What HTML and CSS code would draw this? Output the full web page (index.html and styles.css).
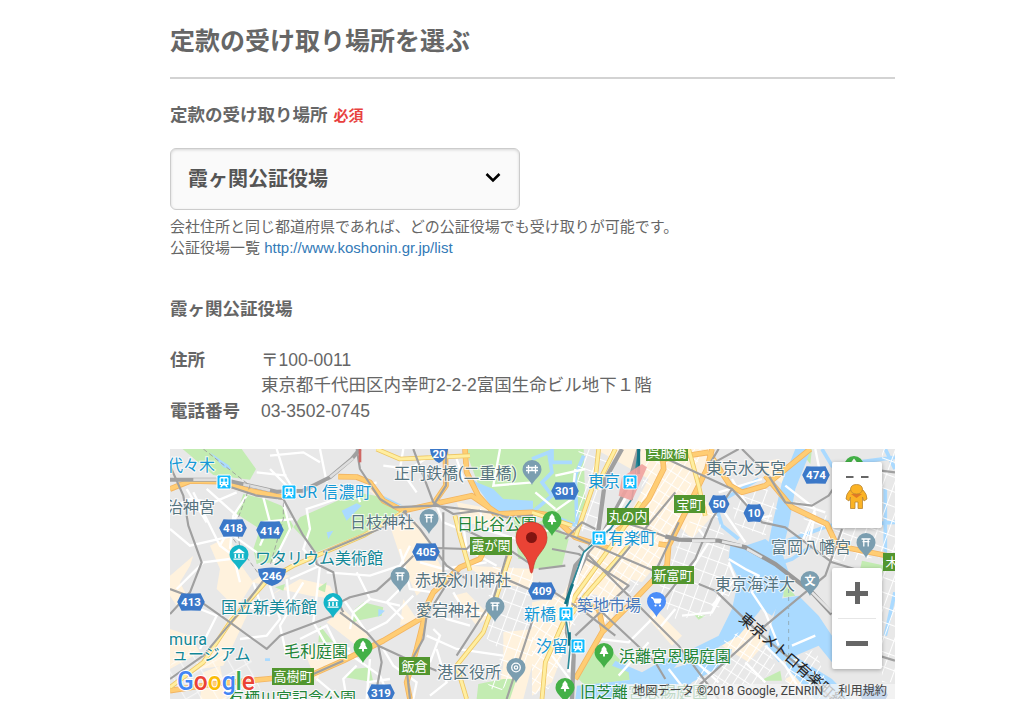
FILE: index.html
```html
<!DOCTYPE html>
<html lang="ja">
<head>
    <meta charset="UTF-8">
    <meta name="viewport" content="width=device-width, initial-scale=1.0">
    <title>定款の受け取り場所を選ぶ</title>
    <link rel="stylesheet" href="styles.css">
</head>
<body>
    <div class="container">
        <h1 class="title">定款の受け取り場所を選ぶ</h1>

        <div class="field">
            <div class="label">定款の受け取り場所<span class="required">必須</span></div>
            <div class="select">
                <span>霞ヶ関公証役場</span>
                <svg class="arrow" width="16" height="12" viewBox="0 0 16 12"><path d="M1.500 2 8 8.500 14.500 2" fill="none" stroke="#000" stroke-width="2.500"/></svg>
            </div>
            <p class="help">会社住所と同じ都道府県であれば、どの公証役場でも受け取りが可能です。<br>公証役場一覧 <a href="http://www.koshonin.gr.jp/list">http://www.koshonin.gr.jp/list</a></p>
        </div>

        <h2 class="office">霞ヶ関公証役場</h2>
        <dl class="info">
            <dt>住所</dt>
            <dd>〒100-0011<br>東京都千代田区内幸町2-2-2富国生命ビル地下１階</dd>
            <dt>電話番号</dt>
            <dd>03-3502-0745</dd>
        </dl>

        <div class="map">
            <svg class="map-canvas" width="725" height="250" viewBox="170 449 725 250">
                <defs>
                    <pattern id="grid-a" width="34" height="24" patternUnits="userSpaceOnUse" patternTransform="rotate(-57)">
                        <path d="M0 0H34M0 0V24" stroke="#fff" stroke-width="6" fill="none"/>
                    </pattern>
                    <pattern id="grid-b" width="32" height="42" patternUnits="userSpaceOnUse" patternTransform="rotate(20)">
                        <path d="M0 0H32M0 0V42" stroke="#fff" stroke-width="6" fill="none"/>
                    </pattern>
                    <pattern id="grid-c" width="42" height="56" patternUnits="userSpaceOnUse" patternTransform="rotate(-30)">
                        <path d="M0 0H42M0 0V56" stroke="#fff" stroke-width="7" fill="none"/>
                    </pattern>
                    <!-- ピンの先端が原点 -->
                    <path id="pin" d="M0 0C-1.500-5-9.500-9-9.500-15.500A9.500 9.500 0 0 1 9.500-15.500C9.500-9 1.500-5 0 0Z"/>
                    <g id="shrine">
                        <use href="#pin" fill="#7b9eb0"/>
                        <path d="M-4.500-19H4.500M-3.500-16.300H3.500M-2.200-19V-11.500M2.200-19V-11.500" stroke="#fff" stroke-width="1.300" fill="none"/>
                    </g>
                    <g id="tree">
                        <use href="#pin" fill="#43b047"/>
                        <path d="M0-22.500-3-18.500H-2L-4.500-14H-1V-11.500H1V-14H4.500L2-18.500H3Z" fill="#fff"/>
                    </g>
                    <g id="museum">
                        <use href="#pin" fill="#14b5c8"/>
                        <path d="M-5.500-17.500 0-21.500 5.500-17.500V-16.700H-5.500ZM-5.500-11.500H5.500V-10.300H-5.500ZM-4.500-16h1.600v4h-1.600ZM-.8-16h1.600v4h-1.600ZM2.900-16h1.600v4h-1.600Z" fill="#fff"/>
                    </g>
                    <g id="train">
                        <rect x="-7" y="-7" width="14" height="14" rx="1.500" fill="#0fbcff" stroke="#fff" stroke-width="1"/>
                        <path d="M-4.500-3.500Q-4.500-5-3-5H3Q4.500-5 4.500-3.500V3H2.800L4 5.300H2.300L1 3.500H-1L-2.300 5.300H-4L-2.800 3H-4.500Z" fill="#fff"/>
                        <path d="M-3.200-3.500H-.6V-.3H-3.200ZM.6-3.500H3.200V-.3H.6ZM-3 .8H-1.600V2H-3ZM1.600.8H3V2H1.600Z" fill="#0fbcff"/>
                    </g>
                    <path id="hex" d="M-13.800 0-9.500-8.800Q0-8 9.500-8.800L13.800 0 9.500 8.800Q0 8-9.500 8.800Z" fill="#3b78c8"/>
                    <path id="hex-s" d="M-10.500 0-6-9Q0-8 6-9L10.500 0 6 9Q0 8-6 9Z" fill="#3b78c8"/>
                    <path id="shield" d="M-14-7Q0-10 14-7 13.500 6 0 10-13.500 6-14-7Z" fill="#3b78c8"/>

                    <!-- 道路の形（西側・東側） -->
                    <g id="express-w">
                        <path d="M0 120 60 96 150 98 240 125 340 145M505 83 560 84 600 100 640 155 700 185 790 165 905 140 1000 205M826 0 828 110 790 165M885 0 890 70 925 140 975 195 1089 190"/>
                        <path d="M0 725 130 705 290 690 430 675 520 635 640 575 750 510 790 430 870 355 930 330 960 270M765 500 740 600 710 700 720 750"/>
                    </g>
                    <g id="express-e">
                        <path d="M530 10 595 110 630 130 700 110 835 0M400 30 530 10M700 80 780 175 885 225 915 290 1089 325"/>
                        <path d="M390 0 395 60 350 150 290 220 250 250M540 0 525 60 440 230 410 290 405 350 300 460 210 550 130 690M380 285 415 290M110 445 200 480 215 550"/>
                        <path d="M0 190 60 200 130 265 235 300"/>
                    </g>
                    <g id="avenue-w">
                        <path d="M0 715 100 640 180 520 290 395 370 350 440 320 580 260 700 190M855 200 870 260 900 365M620 0 690 30 900 20M1020 320 980 440 940 550 860 650 890 750"/>
                    </g>
                    <g id="avenue-e">
                        <path d="M200 0 190 90 130 265M325 160 260 260 130 440 40 640 30 750M290 290 160 440 100 520M250 0 190 120M0 190 120 230M470 0 500 110 520 200"/>
                    </g>
                </defs>

                <rect x="170" y="449" width="725" height="250" fill="#e8e8e8"/>

                <!-- 市街地 -->
                <g fill="#fff2dd">
                    <g transform="translate(170 449) scale(.3333)">
                        <path d="M0 380 70 320 60 350 30 400 50 440 20 470 0 440ZM120 290 180 260 200 330 250 400 200 480 140 420 150 360ZM180 500 240 480 160 650 90 660ZM0 540 60 560 90 610 0 660Z"/>
                        <path d="M300 440 390 390 480 410 500 450 420 440 330 420ZM240 400 290 370 360 380 310 410ZM100 670 150 650 170 750 90 750ZM470 520 520 480 600 560 560 590ZM400 600 520 580 560 630 460 650 440 700Z"/>
                        <path d="M660 230 740 220 790 310 850 420 780 400 740 440 700 350ZM580 110 700 210 660 160ZM850 440 890 430 960 500 920 530ZM700 450 740 510 690 530ZM890 350 1089 360V420L960 400ZM1000 550 1089 540V640L1060 750H980L1000 650ZM860 160 970 180 1000 240 880 220Z"/>
                    </g>
                    <g transform="translate(532 449) scale(.3333)">
                        <path d="M190 0H540L500 100 420 290 330 400 220 370 170 310 290 200 350 90Z"/>
                        <path d="M150 330 270 260 330 340 260 450 150 430 90 620 60 700 0 740V460L90 440ZM200 430 260 420 240 520 170 500ZM510 150 560 180 480 270 440 230ZM360 470 450 560 420 590 350 510ZM640 530 710 570 650 640 570 590ZM670 40 740 30 760 110 700 70ZM760 690 830 650 860 680 800 730Z"/>
                    </g>
                </g>

                <!-- 公園 -->
                <g fill="#c3ecb2">
                    <g transform="translate(170 449) scale(.3333)">
                        <path d="M38 0H215L258 60 240 92 130 78Z"/>
                        <path d="M220 135 285 150 335 170 370 230 310 340 260 345 250 300 270 240 200 195Z"/>
                        <path d="M390 205 560 130 640 145 690 185 610 240 440 310 370 235Z"/>
                        <path d="M885 0H1089V190L990 190 930 120ZM1030 200H1089V330H1045Z"/>
                        <path d="M555 480 580 460 640 475 635 500 560 515 540 530ZM440 420 470 400 465 430ZM315 415 345 405 340 425ZM450 530 490 580 445 580ZM550 660 600 655 610 700 525 685ZM925 705 1000 690 1040 690 1020 750H920Z"/>
                    </g>
                    <g transform="translate(532 449) scale(.3333)">
                        <path d="M0 0H155L160 170 120 230 50 200 0 190ZM50 205 110 270 90 350 0 360V230Z"/>
                        <path d="M170 620 220 585 290 660 310 690 160 710 130 680ZM480 490 520 500 500 512ZM620 455 660 420 665 460ZM750 390 790 440 755 445ZM835 45 800 0H840ZM685 695 745 665 750 695ZM990 335 1060 350 1040 400 980 380Z"/>
                    </g>
                </g>

                <!-- 水面 -->
                <g fill="#aadaff">
                    <g transform="translate(170 449) scale(.3333)">
                        <path d="M885 65 920 100 970 120 1000 150 1089 155V195H1000L965 175 930 125ZM515 185 560 163 575 170 530 215ZM470 250 490 245 475 270ZM625 480 645 485 625 503ZM120 10 155 35 175 48 185 62 160 55ZM285 628H300V636H285ZM640 140 700 170 650 158Z"/>
                    </g>
                    <g transform="translate(532 449) scale(.3333)">
                        <path d="M790 0H838L790 120 770 230 745 330 690 380 720 230 750 100Z"/>
                        <path d="M595 290 640 300 690 345 720 430 680 490 620 560 550 600 440 640 400 690 380 750H300L290 670 240 650 250 635 330 670 400 630 480 600 560 560 600 480 620 390 590 330Z"/>
                        <path d="M640 290 700 270 750 310 770 370 750 450 720 500 640 450 620 380Z"/>
                        <path d="M740 450 800 440 860 500 900 560V640L860 590 790 620 740 640 700 590Z"/>
                        <path d="M390 670 600 600 590 640 480 700 440 750H370ZM770 610 900 690 960 750H850L760 650ZM135 710 320 690 310 750H130Z"/>
                    </g>
                </g>
                <g transform="translate(532 449) scale(.3333)" fill="none" stroke="#aadaff" stroke-width="11">
                    <path d="M0 30 50 10 60 70 30 100 60 140 0 190M155 20 130 80 135 230 60 200M60 0V40H120M545 150 570 230 620 270M700 300 890 230 1089 220M870 0 900 50 1089 25M1060 120V360M1089 430 1060 560M680 90 560 160M820 200 890 220M1060 0 1089 60M840 290 780 330 720 350"/>
                </g>

                <!-- 細街路 -->
                <g transform="translate(532 449) scale(.3333)">
                    <path d="M200 260 320 160 350 0 510 0 420 290 300 430 150 480 50 720 0 740V480L100 430 150 320Z" fill="url(#grid-a)"/>
                    <path d="M460 230 540 150 590 300 600 430 540 500 430 510 370 440Z" fill="url(#grid-b)"/>
                    <path d="M600 150 700 110 740 190 700 260 610 230ZM820 190 1089 230V320L900 340 800 270ZM1050 0H1089V700H1050Z" fill="url(#grid-b)"/>
                    <path d="M580 570 680 520 730 650 640 750H450ZM760 640 850 600 900 750H760Z" fill="url(#grid-a)"/>
                    <path d="M140 0 240 0 190 260 130 240Z" fill="url(#grid-b)"/>
                </g>
                <g transform="translate(170 449) scale(.3333)">
                    <path d="M970 340 1089 370V620L980 740 950 700 1000 610 940 560Z" fill="url(#grid-b)"/>
                    <path d="M40 600 240 620 280 750H0V650Z" fill="url(#grid-c)" opacity=".6"/>
                </g>
                <g fill="none" stroke="#fff" stroke-width="7">
                    <g transform="translate(170 449) scale(.3333)">
                        <path d="M0 180 60 150 130 160 200 130M70 130 150 290 190 320 210 400M110 120 200 200 150 290M50 120 110 220M0 240 60 290 190 260 260 310M230 140 190 200 180 300M280 145 300 220 270 290M270 220 370 210M300 60 350 110 320 150M320 0 345 80 370 120M300 20 400 10 450 40M450 0 470 100M260 70 350 80M360 390 450 350 440 440 430 520 470 590M440 350 400 300 420 240 410 180 500 150"/>
                        <path d="M310 340 360 240 340 160M350 390 360 480 330 530 350 620M300 410 330 510 290 560 210 570M210 460 300 500M400 400 350 480M470 370 600 380 690 350 720 290M540 540 550 490 600 450 690 470M520 450 590 550 650 520 730 440M560 370 600 450M690 420 650 460 700 510M690 300 720 420 790 430M750 340 820 360 950 340M880 230 890 300 980 350M930 180 940 240 1040 270M800 170 820 220 870 240"/>
                        <path d="M500 590 560 630 630 680 660 750M600 630 590 750M440 690 500 740M560 650 520 690 530 750M800 450 830 510 900 530M770 560 860 600 1000 620M780 640 810 560 790 540M640 600 670 650 740 700 730 750M800 600 830 700 780 740M570 160 560 120 620 100M700 0 690 60 740 130M780 20 720 60 640 50M860 30 880 90 960 90M990 0 970 110 1089 100M90 480 140 500 90 600M20 420 100 340 180 330"/>
                        <path d="M850 430 880 480 960 500M250 400 270 460 190 500M590 700 660 690M390 570 470 530 500 590 540 600"/>
                    </g>
                    <g transform="translate(532 449) scale(.3333)">
                        <path d="M130 60 120 150 70 185M70 80 160 60M360 510 450 600 560 700M590 330 640 360 680 380 660 430 700 490 740 590M540 470 610 390 590 340M760 110 850 180 810 280M790 160 880 190M850 0 870 100M850 190 830 290M570 180 640 280M600 90 670 210 720 200M560 130 690 90M450 500 540 490 590 400M350 580 260 680M230 480 200 570 290 580 370 500"/>
                        <path d="M460 390 530 280 500 240M380 540 430 480M700 590 760 650 820 750M640 640 700 700M780 590 850 560M0 260 60 240M10 130 70 180M60 620 120 700M410 660 480 750" />
                    </g>
                </g>

                <!-- 幹線道路 -->
                <g fill="none" stroke="#f3b562" stroke-width="17" stroke-linejoin="round">
                    <use href="#express-w" transform="translate(170 449) scale(.3333)"/>
                    <use href="#express-e" transform="translate(532 449) scale(.3333)"/>
                </g>
                <g fill="none" stroke="#ffcd74" stroke-width="12" stroke-linejoin="round">
                    <use href="#express-w" transform="translate(170 449) scale(.3333)"/>
                    <use href="#express-e" transform="translate(532 449) scale(.3333)"/>
                </g>
                <g fill="none" stroke="#eec663" stroke-width="14" stroke-linejoin="round">
                    <use href="#avenue-w" transform="translate(170 449) scale(.3333)"/>
                    <use href="#avenue-e" transform="translate(532 449) scale(.3333)"/>
                </g>
                <g fill="none" stroke="#ffeea0" stroke-width="9" stroke-linejoin="round">
                    <use href="#avenue-w" transform="translate(170 449) scale(.3333)"/>
                    <use href="#avenue-e" transform="translate(532 449) scale(.3333)"/>
                </g>

                <!-- 鉄道 -->
                <g fill="none" stroke="#a0a0a0" stroke-width="6.500" stroke-linejoin="round">
                    <g transform="translate(170 449) scale(.3333)">
                        <path d="M0 92H160L320 128 400 125 480 85 545 30 570 0" stroke-width="12"/>
                        <path d="M0 50 40 140 55 230 95 340 60 430 0 495M170 110 260 140 340 150 400 260 435 310 440 345 490 370 505 460 520 490"/>
                        <path d="M560 0 570 60 630 150 670 175 790 170 880 180 960 190 1010 205 1089 200M730 0 790 160 850 195 930 185M828 0V110L790 170"/>
                        <path d="M0 420 80 450 180 520 290 600 330 560 490 500M510 460 540 445 620 425 670 380 730 320M510 490 590 550 625 590 700 625 800 665M625 590 635 640 620 720M700 185 750 240 830 350 890 390M820 190V380M740 295 890 300 920 270"/>
                        <path d="M460 310 640 235 710 185M0 690 100 620 200 500 280 395M430 675 520 635M840 390 770 500 760 570 710 660 720 750M1010 320 970 450 860 620M960 370 1089 425M880 240 1030 310 1089 350M1089 510 1010 750"/>
                    </g>
                    <g transform="translate(532 449) scale(.3333)">
                        <path d="M270 0 220 90 200 240 110 430 105 550 125 620 120 750M320 0 290 110 210 260 130 350 110 430" stroke-width="13"/>
                        <path d="M240 210 340 240 420 270M0 220 130 265 330 350 400 380M60 300 140 315 290 410 130 560M20 360 100 350M140 290 440 590 560 750M100 270 150 220 190 240M340 0 600 120 690 220 760 235 900 340 1000 370"/>
                        <path d="M560 0 530 50 620 0M630 0 710 80 760 160 840 170 890 140 910 110M600 120 540 210 490 330 380 470M500 405 550 425 690 560 800 650 900 750M500 710 700 530 820 430 880 380 930 240M200 480 370 640 400 690M230 370 430 130M20 400 160 490 250 560M1040 620 1089 635M930 50 1089 70M440 220 360 390"/>
                    </g>
                </g>
                <g fill="none" transform="translate(532 449) scale(.3333)">
                    <path d="M400 262 440 272 560 275 640 295 730 345 840 430 900 495" stroke="#989898" stroke-width="13"/>
                    <path d="M480 275H550M570 278 630 290M645 300 690 325M840 430 900 490" stroke="#e4e4e4" stroke-width="8"/>
                    <path d="M300 110 240 220 160 310 120 430 105 510 115 610 110 670" stroke="#fff" stroke-width="9"/>
                    <path d="M320 0 300 150 235 240 155 310 115 420 100 500 115 590 108 660" stroke="#2b8999" stroke-width="5"/>
                    <path d="M320 0V75M122 405 100 465M112 550V590" stroke="#117485" stroke-width="9"/>
                    <path d="M270 85 330 45 345 55 300 155 260 140Z" fill="#efa29e" opacity=".9"/>
                    <path d="M770 420V640" stroke="#93aebc" stroke-width="3" stroke-dasharray="12 12"/>
                </g>
                <g fill="none" transform="translate(170 449) scale(.3333)">
                    <path d="M70 92H140M220 106 300 124M480 85 550 28" stroke="#dedede" stroke-width="8"/>
                    <path d="M570 0V40" stroke="#cf6864" stroke-width="8"/>
                    <path d="M100 0 240 110 200 220 210 300M340 160V210L300 350M190 270 270 380" stroke="#999" stroke-width="2.500" stroke-dasharray="14 8"/>
                </g>

                <!-- 地名 -->
                <g class="place station">
                    <text x="167" y="471">代々木</text>
                    <text x="298" y="498" textLength="73">JR 信濃町</text>
                    <text x="588" y="487">東京</text>
                    <text x="608" y="544">有楽町</text>
                    <text x="524" y="620">新橋</text>
                    <text x="536" y="652">汐留</text>
                </g>
                <g class="place spot">
                    <text x="167" y="513">治神宮</text>
                    <text x="394" y="479">正門鉄橋(二重橋)</text>
                    <text x="350" y="528">日枝神社</text>
                    <text x="415" y="586">赤坂氷川神社</text>
                    <text x="416" y="616">愛宕神社</text>
                    <text x="437" y="678">港区役所</text>
                    <text x="706" y="474">東京水天宮</text>
                    <text x="771" y="553">富岡八幡宮</text>
                    <text x="715" y="590">東京海洋大</text>
                </g>
                <g class="place art">
                    <text x="255" y="564">ワタリウム美術館</text>
                    <text x="221" y="613">国立新美術館</text>
                    <text x="169" y="645" textLength="38">mura</text>
                    <text x="172" y="660">ュージアム</text>
                </g>
                <g class="place park">
                    <text x="457" y="530">日比谷公園</text>
                    <text x="284" y="657">毛利庭園</text>
                    <text x="228" y="704">有栖川宮記念公園</text>
                    <text x="619" y="662">浜離宮恩賜庭園</text>
                    <text x="580" y="698">旧芝離宮恩賜庭園</text>
                </g>
                <text class="place market" x="577" y="611">築地市場</text>
                <text class="line-name" transform="translate(738 620) rotate(41)">東京メトロ有楽町線</text>

                <!-- 出入口 -->
                <g class="ramp">
                    <rect x="646" y="443" width="42" height="18"/><text x="667" y="457">呉服橋</text>
                    <rect x="674" y="495" width="31" height="18"/><text x="689.500" y="509">宝町</text>
                    <rect x="607" y="508" width="42" height="17"/><text x="628" y="521">丸の内</text>
                    <rect x="470" y="537" width="42" height="18"/><text x="491" y="550">霞が関</text>
                    <rect x="652" y="566" width="42" height="18"/><text x="673" y="580">新富町</text>
                    <rect x="272" y="668" width="42" height="17"/><text x="293" y="681">高樹町</text>
                    <rect x="399" y="657" width="31" height="18"/><text x="414.500" y="671">飯倉</text>
                    <rect x="883" y="553" width="24" height="18"/><text x="892" y="567">木</text>
                </g>

                <!-- 路線番号 -->
                <g class="route">
                    <use href="#hex" x="233" y="528"/><text x="233" y="532">418</text>
                    <use href="#hex" x="270" y="530"/><text x="270" y="534.500">414</text>
                    <use href="#hex" x="191" y="602"/><text x="191" y="606">413</text>
                    <use href="#hex" x="426" y="552"/><text x="426" y="556">405</text>
                    <use href="#hex" x="565" y="491"/><text x="565" y="495">301</text>
                    <use href="#hex" x="542" y="591"/><text x="542" y="595">409</text>
                    <use href="#hex" x="816" y="475"/><text x="816" y="479">474</text>
                    <use href="#hex" x="381" y="693"/><text x="381" y="697">319</text>
                    <use href="#hex-s" x="719" y="504"/><text x="719" y="508">50</text>
                    <use href="#hex-s" x="754" y="513"/><text x="754" y="517">10</text>
                    <use href="#shield" x="272" y="576"/><text x="272" y="580">246</text>
                    <path d="M430 445H448Q449 458 439 463 429 458 430 445Z" fill="#3b78c8"/><text x="439" y="458">20</text>
                    <use href="#hex" x="874" y="695"/>
                </g>

                <use href="#train" x="224" y="482"/>
                <use href="#train" x="289" y="492"/>
                <use href="#train" x="630" y="482"/>
                <use href="#train" x="599" y="538"/>
                <use href="#train" x="566" y="614"/>
                <use href="#train" x="578" y="646"/>
                <use href="#shrine" x="429" y="534"/>
                <use href="#shrine" x="400" y="592"/>
                <use href="#shrine" x="495" y="622"/>
                <use href="#shrine" x="866" y="558"/>
                <use href="#tree" x="552" y="536"/>
                <use href="#tree" x="363" y="663"/>
                <use href="#tree" x="604" y="668"/>
                <use href="#tree" x="565" y="703"/>
                <use href="#tree" x="854" y="481"/>
                <use href="#museum" x="239" y="570"/>
                <use href="#museum" x="333" y="618"/>
                <g transform="translate(532 485)">
                    <use href="#pin" fill="#7b9eb0"/>
                    <path d="M-6-17.500H6M-6-14.500H6M-3.500-20V-11.500M3.500-20V-11.500M0-17.500V-14.500" stroke="#fff" stroke-width="1.300"/>
                </g>
                <g transform="translate(516 683)">
                    <use href="#pin" fill="#7b9eb0"/>
                    <circle cy="-15.500" r="4.300" fill="none" stroke="#fff" stroke-width="1.300"/><circle cy="-15.500" r="1.700" fill="none" stroke="#fff" stroke-width="1.200"/>
                </g>
                <g transform="translate(810 596)">
                    <use href="#pin" fill="#7b9eb0"/>
                    <text class="school" y="-11.500">文</text>
                </g>
                <g transform="translate(656.500 617)">
                    <use href="#pin" fill="#4b8df8"/>
                    <path d="M-5.500-19.500H-3.500L-1.500-14H3.500L4.500-18H-2.800Z" fill="#fff" stroke="#fff"/><circle cx="-1" cy="-11.500" r="1.100" fill="#fff"/><circle cx="3.500" cy="-11.500" r="1.100" fill="#fff"/>
                </g>

                <!-- 公証役場の位置 -->
                <path d="M531.500 573C529.500 573 530.500 565 526 557.500 521 550 516 546 516 537.500A15.500 15.500 0 0 1 547 537.500C547 546 542 550 537 557.500 532.500 565 533.500 573 531.500 573Z" fill="#ea4335" stroke="#c5352b" stroke-width=".7"/>
                <circle cx="531.500" cy="537.500" r="5.500" fill="#811411"/>

                <text class="logo" x="177" y="690" textLength="78" lengthAdjust="spacingAndGlyphs"><tspan fill="#4285f4">G</tspan><tspan fill="#ea4335">o</tspan><tspan fill="#fbbc05">o</tspan><tspan fill="#4285f4">g</tspan><tspan fill="#34a853">l</tspan><tspan fill="#ea4335">e</tspan></text>
            </svg>

            <div class="street-view">
                <svg width="50" height="66" viewBox="0 0 50 66">
                    <path d="M14 15H21.500M29 15H36.500" stroke="#666" stroke-width="2"/>
                    <path d="M18 28Q14 32 14 37L17 39 18.500 35V46.500H23V40H26V46.500H30.500V35L32 39 35 37Q35 32 31 28Z" fill="#fbb325" stroke="#b98532" stroke-width=".8"/>
                    <path d="M19 32 24.500 36 30 32Z" fill="#e27a25"/>
                    <path d="M18.500 27Q19 22.500 24.500 22.500T30.500 27Q30 32 24.500 32T18.500 27Z" fill="#fbb325" stroke="#b98532" stroke-width=".8"/>
                </svg>
            </div>
            <div class="zoom">
                <div class="zoom-button"><span class="plus"></span></div>
                <div class="zoom-button"><span class="minus"></span></div>
            </div>
            <div class="copyright"><span>地図データ ©2018 Google, ZENRIN</span><span>利用規約</span></div>
        </div>
    </div>
</body>
</html>
```
FILE: styles.css
```css
* {
    margin: 0;
    padding: 0;
    box-sizing: border-box;
}

body {
    font-family: "Liberation Sans", Arial, "Noto Sans CJK JP", sans-serif;
    font-size: 17.5px;
    color: #666;
    background-color: #fff;
    overflow: hidden;
}

.container {
    width: 725px;
    margin-left: 170px;
}

.title {
    height: 79px;
    padding-top: 22px;
    font-size: 25px;
    line-height: 38px;
    font-weight: bold;
    border-bottom: 2px solid #d3d3d3;
}

.label {
    padding-top: 23px;
    line-height: 26px;
    font-weight: bold;
}

.required {
    margin-left: 6px;
    font-size: 15px;
    color: #e8413e;
}

.select {
    display: flex;
    align-items: center;
    justify-content: space-between;
    width: 350px;
    height: 62px;
    margin-top: 19px;
    padding: 0 18px 3px 17px;
    font-size: 20px;
    font-weight: bold;
    color: #555;
    background-color: #fafafa;
    border: 1px solid #ccc;
    border-radius: 6px;
    box-shadow: inset 0 1px 3px rgba(0,0,0,0.15);
}

.help {
    margin-top: 6px;
    font-size: 15px;
    line-height: 21px;
}

.help a {
    color: #337ab7;
    text-decoration: none;
}

.office {
    margin-top: 38px;
    font-size: 17.5px;
    line-height: 26px;
    font-weight: bold;
}

.info {
    display: grid;
    grid-template-columns: 91px 1fr;
    margin-top: 25.5px;
    line-height: 25.5px;
}

.info dt {
    font-weight: bold;
}

.map {
    position: relative;
    height: 250px;
    margin-top: 25px;
    overflow: hidden;
    font-family: Roboto, "Noto Sans CJK JP", sans-serif;
}

.map-canvas {
    display: block;
}

.place {
    font-size: 16px;
    paint-order: stroke;
    stroke: rgba(255,255,255,0.75);
    stroke-width: 2px;
}

.station {
    fill: #1598d5;
}

.spot {
    fill: #56747f;
}

.art {
    fill: #128797;
}

.park {
    fill: #238538;
}

.market {
    fill: #4879bc;
}

.line-name {
    font-size: 15px;
    fill: #222;
}

.ramp rect {
    fill: #52962f;
}

.ramp text {
    font-size: 13px;
    fill: #fff;
    text-anchor: middle;
}

.route text {
    font-family: "Liberation Sans Narrow", Roboto, sans-serif;
    font-size: 11.5px;
    font-weight: bold;
    fill: #fff;
    text-anchor: middle;
}

.school {
    font-size: 11px;
    font-weight: bold;
    fill: #fff;
    text-anchor: middle;
}

.logo {
    font-family: Roboto, sans-serif;
    font-size: 26px;
    font-weight: 500;
    paint-order: stroke;
    stroke: #fff;
    stroke-width: 2px;
}

.street-view,
.zoom {
    position: absolute;
    right: 13px;
    width: 50px;
    background-color: #fff;
    border-radius: 2px;
    box-shadow: 0 1px 4px rgba(0,0,0,0.3);
}

.street-view {
    top: 13px;
    height: 66px;
}

.zoom {
    top: 119px;
    height: 101px;
}

.zoom-button {
    display: flex;
    align-items: center;
    justify-content: center;
    height: 50px;
}

.zoom-button + .zoom-button {
    margin: 0 6px;
    border-top: 1px solid #e6e6e6;
}

.plus,
.minus {
    width: 22px;
    height: 5px;
    background-color: #666;
}

.plus::before {
    content: "";
    display: block;
    width: 5px;
    height: 22px;
    margin: -8.5px auto 0;
    background-color: #666;
}

.plus {
    display: flex;
}

.copyright {
    position: absolute;
    right: 0;
    bottom: 0;
    display: flex;
    gap: 15px;
    height: 15px;
    padding: 0 8px 0 6px;
    font-size: 12.2px;
    line-height: 15px;
    color: #444;
    background-color: rgba(245,245,245,0.75);
    white-space: nowrap;
}
```
